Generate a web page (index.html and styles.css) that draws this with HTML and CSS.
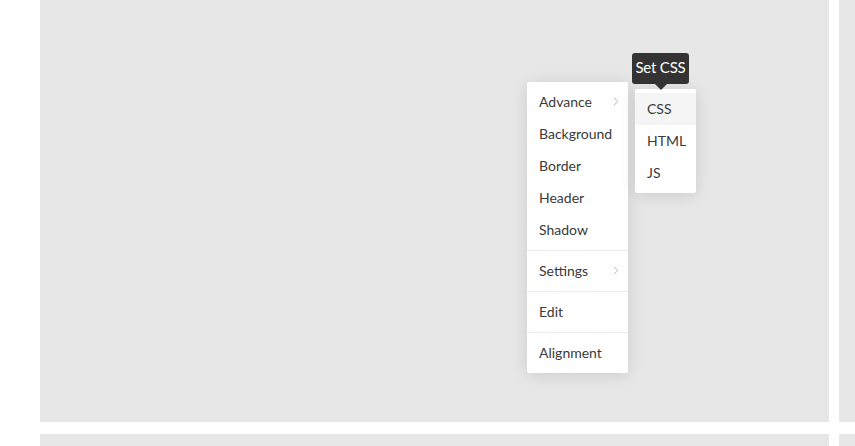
FILE: index.html
```html
<!DOCTYPE html>
<html>
<head>
<meta charset="utf-8">
<link rel="stylesheet" href="styles.css">
</head>
<body>
<div class="grid">
  <div class="panel main">
    <div class="menu">
      <div class="group">
        <div class="item">Advance<span class="chev"><svg width="6" height="9" viewBox="0 0 6 9"><path d="M1 0.8 L4.8 4.5 L1 8.2" fill="none" stroke="#b5b5b5" stroke-width="1"/></svg></span></div>
        <div class="item">Background</div>
        <div class="item">Border</div>
        <div class="item">Header</div>
        <div class="item">Shadow</div>
      </div>
      <div class="group">
        <div class="item">Settings<span class="chev"><svg width="6" height="9" viewBox="0 0 6 9"><path d="M1 0.8 L4.8 4.5 L1 8.2" fill="none" stroke="#b5b5b5" stroke-width="1"/></svg></span></div>
      </div>
      <div class="group">
        <div class="item">Edit</div>
      </div>
      <div class="group">
        <div class="item">Alignment</div>
      </div>
    </div>
    <div class="submenu">
      <div class="item active">CSS</div>
      <div class="item">HTML</div>
      <div class="item">JS</div>
    </div>
    <div class="tooltip">Set CSS</div>
  </div>
  <div class="panel"></div>
  <div class="panel"></div>
  <div class="panel"></div>
</div>
</body>
</html>
```
FILE: styles.css
```css
html, body {
  margin: 0;
  padding: 0;
  background: #fff;
  overflow: hidden;
}
body {
  font-family: Lato, "Noto Sans", sans-serif;
  font-size: 14px;
  color: #3a3a3a;
}
.grid {
  display: grid;
  grid-template-columns: 789px 789px;
  grid-auto-rows: 422px;
  column-gap: 10px;
  row-gap: 12px;
  padding-left: 40px;
}
.panel {
  background: #e7e7e7;
}
.main {
  position: relative;
}
.menu {
  position: absolute;
  left: 487px;
  top: 82px;
  width: 101px;
  background: #fff;
  border-radius: 2px;
  box-shadow: 0 2px 16px rgba(0,0,0,0.12);
}
.group {
  padding: 4px 0;
}
.group + .group {
  border-top: 1px solid #ececec;
}
.item {
  box-sizing: border-box;
  height: 32px;
  padding: 0 12px 2px;
  display: flex;
  align-items: center;
  justify-content: space-between;
  white-space: nowrap;
}
.chev {
  display: flex;
  margin-right: -3px;
  padding-top: 1px;
}
.submenu {
  position: absolute;
  left: 595px;
  top: 89px;
  width: 61px;
  padding: 4px 0;
  background: #fff;
  border-radius: 2px;
  box-shadow: 0 2px 16px rgba(0,0,0,0.12);
}
.submenu .active {
  background: #f5f5f5;
}
.tooltip {
  position: absolute;
  left: 592px;
  top: 53px;
  width: 57px;
  height: 31px;
  line-height: 29px;
  text-align: center;
  background: #333;
  color: #fff;
  border-radius: 3px;
  font-size: 15px;
  letter-spacing: -0.2px;
}
.tooltip::after {
  content: "";
  position: absolute;
  left: 50%;
  bottom: -6px;
  margin-left: -6px;
  border-left: 6px solid transparent;
  border-right: 6px solid transparent;
  border-top: 6px solid #333;
}
```
